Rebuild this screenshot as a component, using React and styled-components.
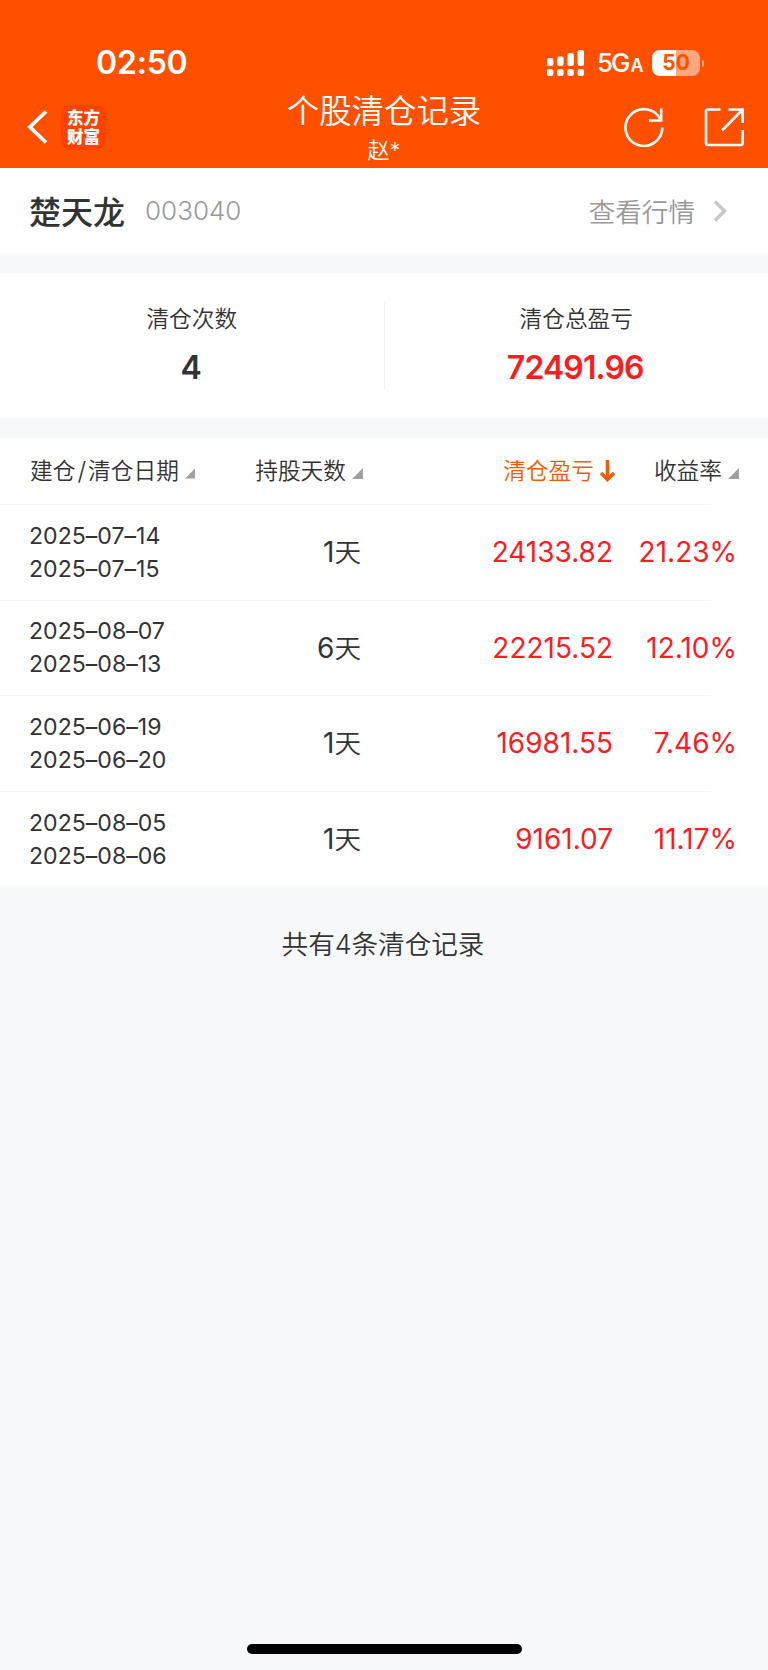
import React from 'react';
import styled, { createGlobalStyle } from 'styled-components';

const records = [
  { open: '2025–07–14', close: '2025–07–15', days: 1, profit: '24133.82', rate: '21.23%' },
  { open: '2025–08–07', close: '2025–08–13', days: 6, profit: '22215.52', rate: '12.10%' },
  { open: '2025–06–19', close: '2025–06–20', days: 1, profit: '16981.55', rate: '7.46%' },
  { open: '2025–08–05', close: '2025–08–06', days: 1, profit: '9161.07', rate: '11.17%' },
];

const GlobalStyle = createGlobalStyle`
  * {
    box-sizing: border-box;
  }

  body {
    margin: 0;
    background: #f7f8fa;
  }
`;

const Page = styled.div`
  display: flex;
  flex-direction: column;
  width: 768px;
  height: 1670px;
  overflow: hidden;
  color: #333;
  background: #f7f8fa;
  font-family: Inter, 'Noto Sans CJK SC', sans-serif;
  font-weight: 350;
  white-space: nowrap;
`;

const Header = styled.header`
  height: 168px;
  color: #fff;
  background: #ff5000;
`;

const StatusBar = styled.div`
  display: flex;
  align-items: center;
  justify-content: space-between;
  height: 92px;
  padding: 34px 64px 0 96px;
`;

const Time = styled.div`
  font-size: 32px;
  font-weight: 600;
  line-height: 40px;
  letter-spacing: -0.2px;
`;

const StatusIcons = styled.div`
  display: flex;
  align-items: center;
`;

const Network = styled.div`
  width: 55px;
  padding-top: 2px;
  font-size: 26px;
  font-weight: 500;
  line-height: 30px;
  letter-spacing: -2px;

  small {
    margin-left: 2px;
    font-size: 18px;
    font-weight: 600;
  }
`;

const Battery = styled.div`
  width: 48px;
  height: 26px;
  border-radius: 8px;
  color: #ff5000;
  background: linear-gradient(90deg, #fff 51%, #ffa880 51%);
  font-size: 21px;
  font-weight: 700;
  line-height: 26px;
  text-align: center;
`;

const BatteryTip = styled.div`
  width: 2px;
  height: 7px;
  margin-left: 2px;
  border-radius: 0 3px 3px 0;
  background: #ffa880;
`;

const NavBar = styled.div`
  display: grid;
  grid-template-columns: 200px 1fr 200px;
  height: 76px;
`;

const NavLeft = styled.div`
  display: flex;
  align-items: center;
  gap: 13px;
  padding: 0 0 7px 27px;
`;

const Logo = styled.div`
  width: 45px;
  height: 45px;
  padding: 4px 0 0 6px;
  border-radius: 9px;
  background: #ff4200;
  font-size: 16.5px;
  font-weight: 900;
  line-height: 19px;
`;

const Heading = styled.div`
  padding-top: 1px;
  text-align: center;
`;

const Title = styled.h1`
  margin: 0;
  font-size: 32.4px;
  font-weight: 350;
  line-height: 38px;
`;

const Account = styled.div`
  font-size: 22px;
  line-height: 38px;
`;

const NavRight = styled.div`
  display: flex;
  align-items: center;
  justify-content: flex-end;
  gap: 40px;
  padding: 0 24px 8px 0;
`;

const StockBar = styled.section`
  display: flex;
  align-items: center;
  height: 86px;
  padding: 0 41px 2px 29px;
  background: #fff;
`;

const StockName = styled.span`
  font-size: 32px;
  font-weight: 500;
`;

const StockCode = styled.span`
  margin-left: 20px;
  color: #999;
  font-size: 26px;
`;

const QuoteLink = styled.a`
  display: flex;
  align-items: center;
  gap: 18px;
  margin-left: auto;
  color: #999;
  font-size: 26.6px;
`;

const Summary = styled.section`
  display: flex;
  align-items: center;
  height: 145px;
  margin: 19px 0 20px;
  background: #fff;
`;

const Stat = styled.div`
  flex: 1;
  height: 88px;
  text-align: center;

  & + & {
    border-left: 1px solid #f1f1f3;
  }
`;

const StatLabel = styled.div`
  font-size: 22.7px;
  line-height: 34px;
`;

const StatValue = styled.div`
  margin-top: 8px;
  padding-right: 2px;
  color: ${(props) => (props.$up ? '#f8201f' : '#333')};
  font-size: 32px;
  font-weight: 600;
  line-height: 48px;
  letter-spacing: -0.9px;
`;

const Table = styled.section`
  background: #fff;
`;

const Row = styled.div`
  display: grid;
  grid-template-columns: 165px 168px 252px 124px;
  align-items: center;
  height: ${(props) => (props.$head ? '66px' : '94.6px')};
  padding-left: 30px;
`;

const Divider = styled.div`
  width: 711px;
  height: 1px;
  background: #f3f3f4;
`;

const HeadCell = styled.div`
  display: flex;
  align-items: center;
  justify-content: flex-end;
  color: ${(props) => (props.$active ? '#f25a05' : '#333')};
  font-size: 22.7px;
  line-height: 34px;
`;

const Slash = styled.span`
  margin: 0 2px;
  font-size: 25px;
`;

const Dates = styled.div`
  margin-left: -1px;
  padding-top: 1px;
  font-size: 23.1px;
  font-weight: 400;
  line-height: 33px;
  font-feature-settings: 'calt' 0;
`;

const Cell = styled.div`
  padding-right: 2px;
  color: ${(props) => (props.$up ? '#f8201f' : '#333')};
  font-size: 28px;
  font-weight: 400;
  line-height: 40px;
  text-align: right;

  span {
    font-size: 26.6px;
    font-weight: 350;
  }
`;

const Footer = styled.div`
  margin-top: 38px;
  padding-right: 2px;
  font-size: 26.6px;
  line-height: 40px;
  text-align: center;
`;

const HomeIndicator = styled.div`
  width: 275px;
  height: 10px;
  margin: auto auto 16px;
  border-radius: 5px;
  background: #000;
`;

const SignalWrapper = styled.svg`
  margin-right: 12px;
`;

const SortMark = styled.svg`
  margin: 4px 0 0 6px;
`;

const DownMark = styled.svg`
  margin-left: 6px;
`;

const ChevronMark = styled.svg`
  margin-top: 2px;
`;

const Signal = () => (
  <SignalWrapper width="38" height="26" viewBox="0 0 38 26" fill="#fff">
    {[8, 6.5, 3, 0].map((top, i) => (
      <g key={top}>
        <rect x={i * 10.2} y={top} width="6.4" height={16 - top} rx="2" />
        <rect x={i * 10.2} y="19" width="6.4" height="7" rx="2" />
      </g>
    ))}
  </SignalWrapper>
);

const BackIcon = () => (
  <svg width="21" height="34" viewBox="0 0 21 34" fill="none" stroke="#fff" strokeWidth="3.8">
    <path d="M19 1.5L3 17L19 32.5" />
  </svg>
);

const RefreshIcon = () => (
  <svg width="40" height="40" viewBox="0 0 40 40" fill="none" stroke="#fff" strokeWidth="2.6">
    <path d="M38.3 20.5A18.4 18.4 0 1 1 36.2 12" />
    <path d="M37.2 1.5V13.5H25" />
  </svg>
);

const ShareIcon = () => (
  <svg width="40" height="40" viewBox="0 0 40 40" fill="none" stroke="#fff" strokeWidth="2.6">
    <path d="M16.5 2.5H4Q2 2.5 2 4.5V36Q2 38 4 38H36.6Q38.6 38 38.6 36V23" />
    <path d="M24.5 2.5H38.6V16M38.6 2.5L18 23.5" />
  </svg>
);

const ChevronIcon = () => (
  <ChevronMark width="14" height="22" viewBox="0 0 14 22" fill="none" stroke="#c8c8c8" strokeWidth="3.6">
    <path d="M2 1.5L11.5 11L2 20.5" />
  </ChevronMark>
);

const SortIcon = () => (
  <SortMark width="11" height="11" viewBox="0 0 11 11">
    <path d="M11 0V11H0Z" fill="#a0a0a0" />
  </SortMark>
);

const DownIcon = () => (
  <DownMark width="15" height="22" viewBox="0 0 15 22" fill="none" stroke="#f25a05">
    <path d="M7.5 0V20" strokeWidth="3.6" />
    <path d="M1 13L7.5 19.5L14 13" strokeWidth="3.6" />
  </DownMark>
);

const App = () => (
  <Page>
    <GlobalStyle />
    <Header>
      <StatusBar>
        <Time>02:50</Time>
        <StatusIcons>
          <Signal />
          <Network>5G<small>A</small></Network>
          <Battery>50</Battery>
          <BatteryTip />
        </StatusIcons>
      </StatusBar>
      <NavBar>
        <NavLeft>
          <BackIcon />
          <Logo>东方<br />财富</Logo>
        </NavLeft>
        <Heading>
          <Title>个股清仓记录</Title>
          <Account>赵*</Account>
        </Heading>
        <NavRight>
          <RefreshIcon />
          <ShareIcon />
        </NavRight>
      </NavBar>
    </Header>

    <StockBar>
      <StockName>楚天龙</StockName>
      <StockCode>003040</StockCode>
      <QuoteLink>查看行情<ChevronIcon /></QuoteLink>
    </StockBar>

    <Summary>
      <Stat>
        <StatLabel>清仓次数</StatLabel>
        <StatValue>4</StatValue>
      </Stat>
      <Stat>
        <StatLabel>清仓总盈亏</StatLabel>
        <StatValue $up>72491.96</StatValue>
      </Stat>
    </Summary>

    <Table>
      <Row $head>
        <HeadCell>建仓<Slash>/</Slash>清仓日期<SortIcon /></HeadCell>
        <HeadCell>持股天数<SortIcon /></HeadCell>
        <HeadCell $active>清仓盈亏<DownIcon /></HeadCell>
        <HeadCell>收益率<SortIcon /></HeadCell>
      </Row>
      {records.map((record) => (
        <React.Fragment key={record.open}>
          <Divider />
          <Row>
            <Dates>
              <div>{record.open}</div>
              <div>{record.close}</div>
            </Dates>
            <Cell>{record.days}<span>天</span></Cell>
            <Cell $up>{record.profit}</Cell>
            <Cell $up>{record.rate}</Cell>
          </Row>
        </React.Fragment>
      ))}
    </Table>

    <Footer>共有4条清仓记录</Footer>
    <HomeIndicator />
  </Page>
);

export default App;
